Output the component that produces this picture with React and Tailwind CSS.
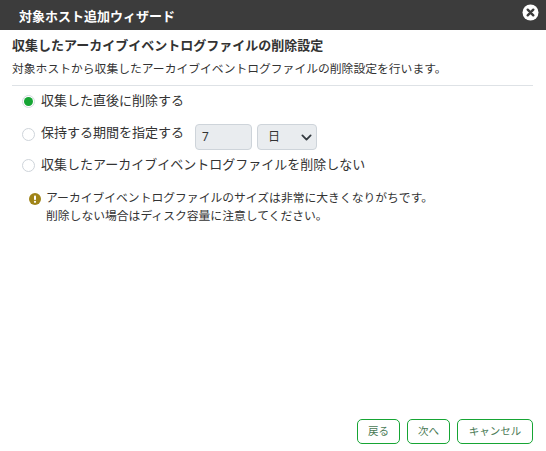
import { useState } from 'react';

const jp = { fontFamily: '"Roboto", "Noto Sans CJK JP", sans-serif' };

function Radio({ checked }) {
  return (
    <span
      className={
        checked
          ? 'flex h-[13px] w-[13px] shrink-0 items-center justify-center rounded-full border border-[#d5dbe0] bg-white'
          : 'h-[13px] w-[13px] shrink-0 rounded-full border border-[#ced4da] bg-white'
      }
    >
      {checked && <span className="h-[9px] w-[9px] rounded-full bg-[#16a534]" />}
    </span>
  );
}

export default function App() {
  const [unit] = useState('日');

  return (
    <div className="flex h-[451px] w-[546px] flex-col overflow-hidden bg-white text-[#333]" style={jp}>
      {/* Title bar */}
      <div className="flex h-[30px] shrink-0 items-center justify-between bg-[#3c3c3c] pl-[19px] pr-[7px]">
        <h1 className="mt-[2px] text-[13px] leading-none font-bold text-white">対象ホスト追加ウィザード</h1>
        <svg width="17" height="17" viewBox="0 0 17 17" className="-mt-[6px]">
          <circle cx="8.5" cy="8.5" r="8" fill="#fff" />
          <path d="M5.7 5.7l5.6 5.6M11.3 5.7l-5.6 5.6" stroke="#3c3c3c" strokeWidth="2.4" strokeLinecap="round" />
        </svg>
      </div>

      {/* Body */}
      <div className="flex min-h-0 flex-1 flex-col px-[12px]">
        <h2 className="mt-[8px] text-[13px] leading-[16px] font-bold text-[#333]">収集したアーカイブイベントログファイルの削除設定</h2>
        <p className="mt-[7px] text-[11.8px] leading-[16px]">対象ホストから収集したアーカイブイベントログファイルの削除設定を行います。</p>
        <div className="mt-[8px] mr-[1px] h-px bg-[#dee2e6]" />

        <div className="mt-[7px] flex h-[16px] items-center gap-[6px] pl-[10px] text-[13px]">
          <Radio checked />
          <span className="-mt-[1px]">収集した直後に削除する</span>
        </div>

        <div className="mt-[15px] flex items-start pl-[10px] text-[13px]">
          <div className="mt-[2px] flex h-[16px] items-center gap-[6px]">
            <Radio />
            <span className="-mt-[2px]">保持する期間を指定する</span>
          </div>
          <div className="ml-[11px] flex h-[26px] w-[57px] items-center rounded-[4px] border border-[#ced4da] bg-[#e9ecef] pl-[6px] text-[12px]">7</div>
          <div className="ml-[5px] flex h-[26px] w-[60px] items-center justify-between rounded-[4px] border border-[#ced4da] bg-[#e9ecef] pr-[4px] pl-[10px] text-[12px]">
            <span>{unit}</span>
            <svg width="11" height="11" viewBox="0 0 16 16" fill="none">
              <path d="M2 5l6 6 6-6" stroke="#343a40" strokeWidth="2.6" strokeLinecap="round" strokeLinejoin="round" />
            </svg>
          </div>
        </div>

        <div className="mt-[7px] flex h-[16px] items-center gap-[6px] pl-[10px] text-[13px]">
          <Radio />
          <span className="-mt-[1px]">収集したアーカイブイベントログファイルを削除しない</span>
        </div>

        <div className="mt-[16px] flex gap-[5px] pl-[17px] text-[11.8px] leading-[18px]">
          <svg width="12" height="12" viewBox="0 0 12 12" className="mt-[4px] shrink-0">
            <circle cx="6" cy="6" r="6" fill="#a08418" />
            <rect x="5" y="2.4" width="2" height="4.6" rx="0.8" fill="#fff" />
            <circle cx="6" cy="8.8" r="1.1" fill="#fff" />
          </svg>
          <p>
            アーカイブイベントログファイルのサイズは非常に大きくなりがちです。
            <br />
            削除しない場合はディスク容量に注意してください。
          </p>
        </div>

        {/* Footer buttons */}
        <div className="mt-auto mb-[7px] flex justify-end gap-[7px] pr-[1px]">
          <button className="h-[25px] w-[43px] rounded-[5px] border border-[#16a534] bg-white text-[10.5px] text-[#4a7a55]">戻る</button>
          <button className="h-[25px] w-[43px] rounded-[5px] border border-[#16a534] bg-white text-[10.5px] text-[#4a7a55]">次へ</button>
          <button className="h-[25px] w-[76px] rounded-[5px] border border-[#16a534] bg-white text-[10.5px] text-[#4a7a55]">キャンセル</button>
        </div>
      </div>
    </div>
  );
}
